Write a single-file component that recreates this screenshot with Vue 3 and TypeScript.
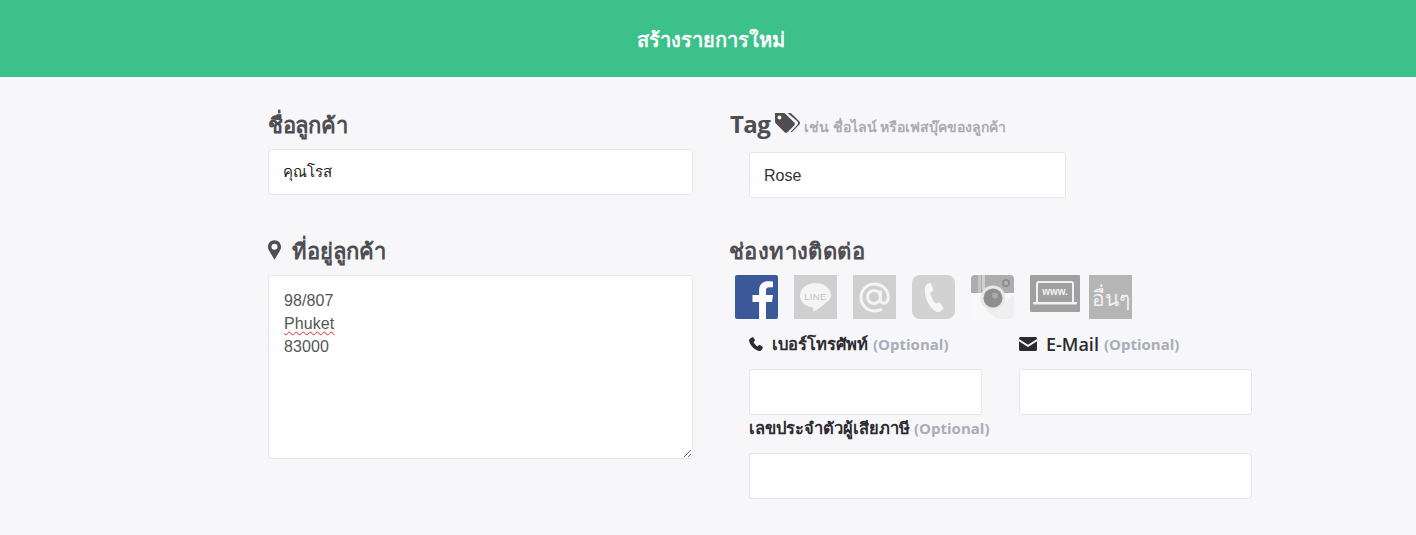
<template>
  <header class="topbar">สร้างรายการใหม่</header>
  <main class="page">
    <section class="col left">
      <h2 class="title first name-title">ชื่อลูกค้า</h2>
      <input class="field name-field" type="text" value="คุณโรส" />

      <h2 class="title second">
        <svg class="pin" viewBox="0 0 12 18"><path fill-rule="evenodd" d="M6 0C2.7 0 0 2.6 0 5.900c0 1.500.5 2.600 1.200 4L6 18l4.800-8.100c.7-1.400 1.200-2.500 1.200-4C12 2.600 9.300 0 6 0zm0 3.200a2.800 2.800 0 1 1 0 5.600 2.800 2.800 0 0 1 0-5.600z" /></svg>
        ที่อยู่ลูกค้า
      </h2>
      <div class="field area" role="textbox" aria-multiline="true">98/807<br /><span class="typo">Phuket</span><br />83000</div>
    </section>

    <section class="col right">
      <h2 class="title first tag-title">
        <span class="tag-word">Tag</span>
        <svg class="tags" viewBox="0 0 26 22"><path fill-rule="evenodd" d="M1 1h8.500c.8 0 1.500.3 2.100.9l8.600 8.700c.8.8.8 2.100 0 2.900l-6.700 6.700c-.8.800-2.100.800-2.900 0L1.900 11.500C1.300 10.900 1 10.200 1 9.500V1zm4.500 2.500a2 2 0 1 0 0 4 2 2 0 0 0 0-4z" /><path d="M13.500 1h2.300c.8 0 1.500.3 2.100.9l7.300 7.400c1 1 1 2.400 0 3.400l-6.700 6.800c-.6.600-1.300.700-2 .5l6.800-7c1.100-1.100 1.100-2.700 0-3.800L13.500 1z" /></svg>
        <small>เช่น ชื่อไลน์ หรือเฟสบุ๊คของลูกค้า</small>
      </h2>
      <div class="indent tag-box">
        <input class="field tag-field" type="text" value="Rose" />
      </div>

      <h2 class="title contact">ช่องทางติดต่อ</h2>
      <div class="channels">
        <svg class="ch" width="43" height="44" viewBox="0 0 43 44">
          <rect width="43" height="44" rx="2" fill="#3b5998" />
          <path fill="#fff" d="M31 44V27h6l1-7h-7v-4.500c0-2 .7-3.300 3.300-3.300H38V6.500c-.8-.1-2.800-.3-5-.3-5.200 0-8.900 3.100-8.900 8.800V20H17.500v7h6.600v17z" />
        </svg>
        <svg class="ch" width="43" height="44" viewBox="0 0 43 44">
          <rect width="43" height="44" fill="#cfcfcf" />
          <path fill="#f4f4f4" d="M21.500 8C12.400 8 6 13.700 6 20.600c0 6.200 5.300 11 12.500 12 .9.200.9.900.7 2.300-.1.700-.3 2.100 1 1.500 1.700-.8 9.500-6 12.700-9.300 2.700-2.700 4.100-4.300 4.100-6.500C37 13.700 30.600 8 21.500 8z" />
          <text x="21.500" y="24.500" text-anchor="middle" class="line-word">LINE</text>
        </svg>
        <svg class="ch" width="43" height="44" viewBox="0 0 43 44">
          <rect width="43" height="44" fill="#cfcfcf" />
          <g fill="none" stroke="#f4f4f4" stroke-width="3">
            <circle cx="21" cy="22" r="6.500" />
            <path d="M27.500 15.500v9c0 5 6.500 5 7.500-.5.400-2 .3-3 .1-4C33.800 13 28 9 21.500 9 13.500 9 8 15 8 22.500S14 36 21.500 36c3 0 5.500-.7 7.500-2" />
          </g>
        </svg>
        <svg class="ch" width="43" height="44" viewBox="0 0 43 44">
          <rect width="43" height="44" rx="8" fill="#d2d2d2" />
          <path fill="#f6f6f6" d="M14.500 9.500l3-1.500c.8-.3 1.400 0 1.700.7l2 6c.2.700 0 1.200-.6 1.600l-2.300 1.500c.4 3.300 2.700 8 5.300 10.600l2.600-1c.7-.2 1.200 0 1.600.5l3.400 4.600c.4.600.4 1.200-.2 1.700l-2.500 2.200c-1 .8-2.600 1.100-4.200.4-6.800-3.500-11.700-13.200-11.500-21.500.1-2.500.6-4.600 1.700-5.800z" />
        </svg>
        <svg class="ch" width="43" height="44" viewBox="0 0 43 44">
          <rect width="43" height="44" rx="4" fill="#f8f8f8" />
          <path fill="#efefef" d="M30 30 43 20v20a4 4 0 0 1-4 4H26l-11-9z" />
          <path fill="#adadad" d="M4 0h35a4 4 0 0 1 4 4v14H31a13 13 0 0 0-19 0H0V4a4 4 0 0 1 4-4z" />
          <rect x="7" y="0" width="3" height="18" fill="#c6c6c6" />
          <rect x="11" y="0" width="3" height="15" fill="#d0d0d0" />
          <circle cx="22" cy="23" r="12.500" fill="#e8e8e8" />
          <circle cx="22" cy="23" r="9.500" fill="#8e8e8e" />
          <circle cx="24" cy="20.500" r="3" fill="#aaa" />
          <circle cx="35" cy="8" r="4" fill="#8e8e8e" />
          <circle cx="35" cy="8" r="2" fill="#b5b5b5" />
        </svg>
        <svg class="ch www" width="50" height="37" viewBox="0 0 50 37">
          <rect width="50" height="37" rx="1" fill="#a0a0a0" />
          <path fill="none" stroke="#f2f2f2" stroke-width="2" d="M7 27V8.500C7 7.700 7.500 7 8.300 7h33.400c.8 0 1.300.7 1.300 1.500V27" />
          <rect x="3" y="27" width="44" height="2.500" rx="1" fill="#f2f2f2" />
          <text x="25" y="20" text-anchor="middle" class="www-word">www.</text>
        </svg>
        <div class="ch other">อื่นๆ</div>
      </div>

      <div class="indent pair">
        <label class="small-field">
          <span class="label">
            <svg class="lb-ic" viewBox="0 0 14 14"><path d="M3.300.3 1.200 1.500C.2 2.100 0 3.200.2 4.300 1 8.300 5.500 13 9.800 13.900c1.100.2 2.100 0 2.700-1l1.200-2c.3-.5.200-.9-.2-1.200L11 8.100c-.4-.3-.9-.2-1.200.1l-1 1.200C7 8.700 5 6.500 4.500 4.900l1.100-1c.3-.3.400-.8.200-1.200L4.400.6C4.100.1 3.700 0 3.300.3z" /></svg>
            <span class="phone-word">เบอร์โทรศัพท์</span> <em>(Optional)</em>
          </span>
          <input class="field" type="text" />
        </label>
        <label class="small-field">
          <span class="label">
            <svg class="lb-ic mail" viewBox="0 0 18 14"><path d="M1.500 0h15C17.300 0 18 .7 18 1.500v.6L9 7.700 0 2.100v-.6C0 .7.700 0 1.500 0zM0 4.300l9 5.600 9-5.600v8.200c0 .8-.7 1.500-1.500 1.500h-15C.7 14 0 13.300 0 12.500z" /></svg>
            <b>E-Mail</b> <em>(Optional)</em>
          </span>
          <input class="field" type="text" />
        </label>
      </div>
      <label class="indent tax">
        <span class="label tax-label">เลขประจำตัวผู้เสียภาษี <em>(Optional)</em></span>
        <input class="field" type="text" />
      </label>
    </section>
  </main>
</template>

<script setup lang="ts">
</script>

<style>
body {
  background: #f7f7fa;
}
</style>

<style scoped>
.topbar {
  height: 77px;
  padding-left: 5px;
  background: #3cc18b;
  color: #fff;
  text-align: center;
  font: 600 20px/79px "Noto Sans", "Open Sans", sans-serif;
}

.page {
  display: flex;
  gap: 37px;
  padding-left: 268px;
  font-family: "Open Sans", "Noto Sans", sans-serif;
}

.left {
  width: 425px;
}

.right {
  width: 522px;
}

.title {
  margin: 0;
  height: 26px;
  display: flex;
  align-items: center;
  gap: 5px;
  font-size: 22px;
  line-height: 26px;
  font-weight: 600;
  color: #4d4d52;
  white-space: nowrap;
}

.title.first {
  margin-top: 34px;
  margin-bottom: 12px;
}

.name-title {
  letter-spacing: -0.3px;
}

.title.second {
  margin-top: 42px;
  margin-bottom: 12px;
  gap: 11px;
}

.field {
  display: block;
  box-sizing: border-box;
  width: 100%;
  height: 46px;
  padding: 0 14px;
  background: #fff;
  border: 1px solid #e5e6e9;
  border-radius: 3px;
  outline: none;
  font: 16px "Liberation Sans", "Noto Sans", sans-serif;
  color: #222;
}

.name-field {
  font-size: 15px;
}

.area {
  height: 184px;
  padding: 13px 15px;
  line-height: 23px;
  color: #555;
  letter-spacing: 0.1px;
  overflow: auto;
  resize: both;
}

.typo {
  text-decoration: underline wavy #e8222a 1px;
  text-underline-offset: 2px;
}

.pin {
  width: 13px;
  height: 20px;
  fill: #4d4d52;
}

.tag-word {
  font-size: 24px;
  font-weight: 700;
  letter-spacing: -0.6px;
}

.tags {
  width: 26px;
  height: 22px;
  fill: #4d4d52;
  margin-bottom: 2px;
  margin-left: -1px;
}

.title small {
  font-size: 14px;
  font-weight: 600;
  color: #aaabb3;
  margin-top: 5px;
  margin-left: -1px;
}

.tag-title {
  gap: 5px;
}

.indent {
  margin-left: 19px;
}

.tag-box {
  width: 317px;
  margin-top: 15px;
}

.tag-field {
  color: #333;
  padding-top: 2px;
}

.contact {
  margin-top: 39px;
  margin-left: -1px;
  letter-spacing: 0.4px;
}

.channels {
  display: flex;
  align-items: flex-start;
  gap: 16px;
  margin-top: 12px;
  margin-left: 5px;
}

.ch {
  display: block;
  flex: none;
}

.www {
  margin-right: -7px;
}

.other {
  width: 43px;
  height: 44px;
  background: #b5b5b5;
  color: #f2f2f2;
  text-align: center;
  font: 21px/46px "Noto Sans", sans-serif;
}

.line-word {
  font: 400 9.5px "Liberation Sans", sans-serif;
  fill: #c4c4c4;
  letter-spacing: 0.4px;
}

.www-word {
  font: 700 10px "Liberation Sans", sans-serif;
  fill: #f2f2f2;
}

.pair {
  display: flex;
  gap: 37px;
  width: 503px;
  margin-top: 12px;
}

.small-field {
  display: block;
  width: 233px;
  flex: none;
}

.label {
  display: flex;
  align-items: center;
  gap: 4px;
  height: 26px;
  margin-bottom: 12px;
  font-size: 16.5px;
  font-weight: 600;
  color: #2b2b30;
  white-space: nowrap;
}

.phone-word {
  margin-right: 1px;
}

.label b {
  font-weight: 600;
  font-size: 18px;
  margin-right: 1px;
}

.label em {
  font-style: normal;
  font-size: 15px;
  font-weight: 700;
  color: #a9adb9;
}

.lb-ic {
  width: 14px;
  height: 14px;
  fill: #2b2b30;
  margin-right: 5px;
}

.mail {
  width: 18px;
  margin-right: 5px;
}

.tax {
  display: block;
  width: 503px;
}

.tax-label {
  margin-bottom: 12px;
}
</style>
